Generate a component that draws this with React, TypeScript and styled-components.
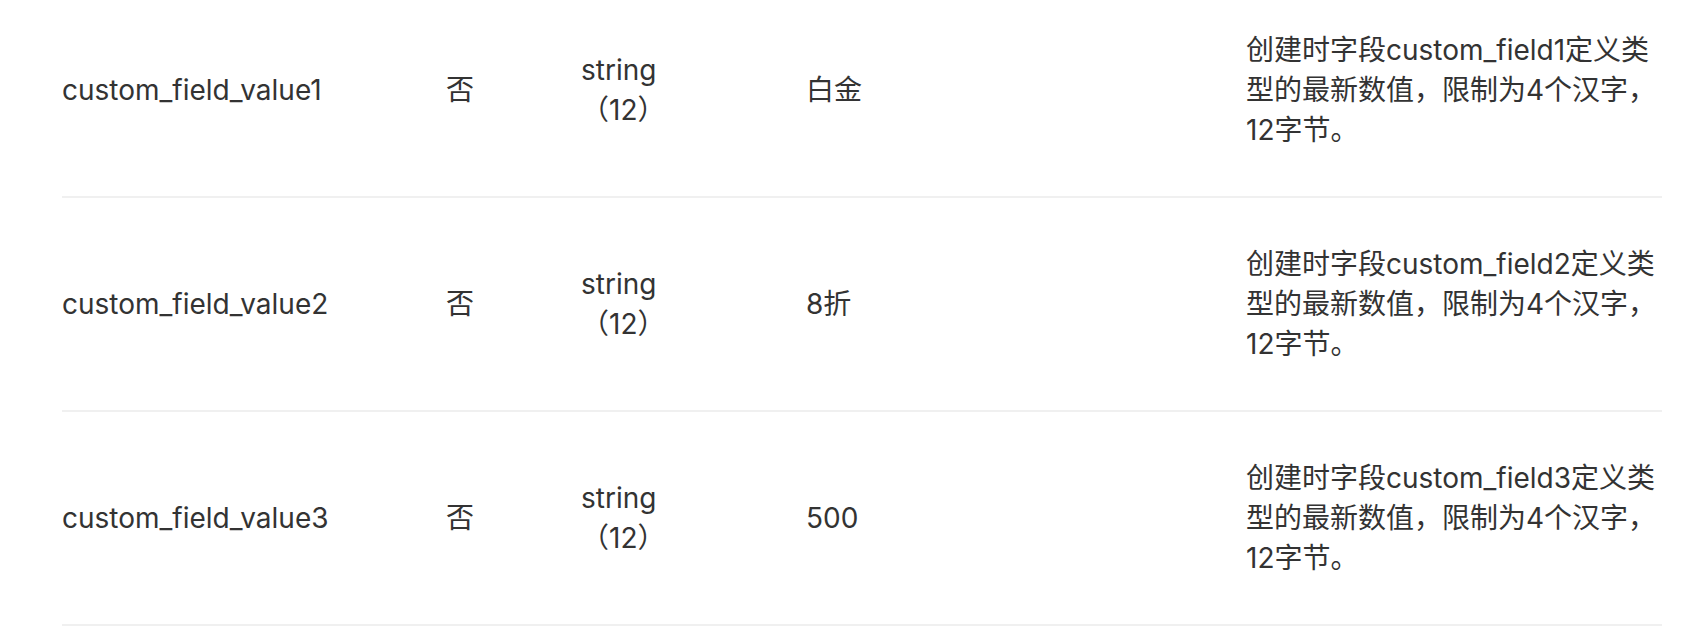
import React from 'react';
import styled, { createGlobalStyle } from 'styled-components';

const rows = [
  { name: 'custom_field_value1', required: '否', type: 'string', size: '（12）', example: '白金', field: 'custom_field1' },
  { name: 'custom_field_value2', required: '否', type: 'string', size: '（12）', example: '8折', field: 'custom_field2' },
  { name: 'custom_field_value3', required: '否', type: 'string', size: '（12）', example: '500', field: 'custom_field3' },
];

const GlobalStyle = createGlobalStyle`
  html, body {
    margin: 0;
    padding: 0;
    background: #fff;
    overflow: hidden;
  }
  body {
    font-family: Inter, "Noto Sans CJK SC", sans-serif;
    color: #333;
  }
`;

export default function App() {
  return (
    <>
      <GlobalStyle />
      <Page>
        <Table>
          {rows.map((r) => (
            <Row key={r.name}>
              <Cell>{r.name}</Cell>
              <Cell>{r.required}</Cell>
              <TypeCell>
                <span>{r.type}</span>
                <span>{r.size}</span>
              </TypeCell>
              <Cell>{r.example}</Cell>
              <Cell>创建时字段{r.field}定义类型的最新数值，限制为4个汉字，12字节。</Cell>
            </Row>
          ))}
        </Table>
      </Page>
    </>
  );
}

const Page = styled.div`
  padding: 0 40px 0 62px;
  margin-top: -16px;
`;

const Table = styled.div`
  width: 1600px;
  display: flex;
  flex-direction: column;
`;

const Row = styled.div`
  display: grid;
  grid-template-columns: 384px 135px 225px 440px 416px;
  align-items: center;
  padding: 46px 0;
  min-height: 120px;
  border-bottom: 2px solid #f0f0f0;
`;

const Cell = styled.div`
  font-size: 28px;
  line-height: 40px;
  color: #333;
`;

const TypeCell = styled(Cell)`
  display: flex;
  flex-direction: column;
  align-items: flex-start;
`;
